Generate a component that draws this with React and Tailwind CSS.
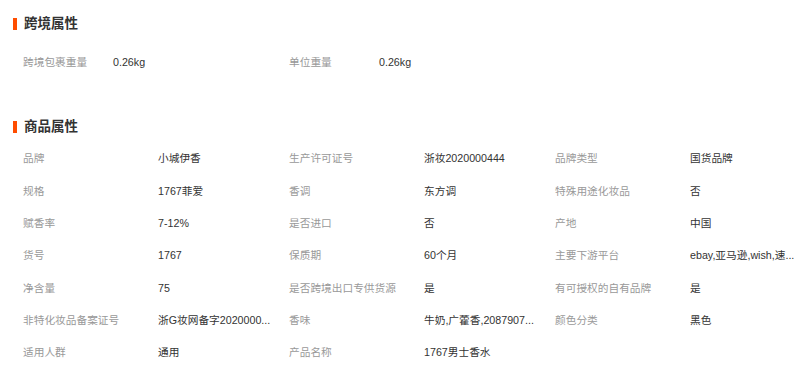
import React from 'react';

const crossBorder = [
    { label: '跨境包裹重量', value: '0.26kg' },
    { label: '单位重量', value: '0.26kg' },
];

// long values are shortened with "..." as the page shows them
const goods = [
    { label: '品牌', value: '小城伊香' },
    { label: '生产许可证号', value: '浙妆2020000444' },
    { label: '品牌类型', value: '国货品牌' },
    { label: '规格', value: '1767菲爱' },
    { label: '香调', value: '东方调' },
    { label: '特殊用途化妆品', value: '否' },
    { label: '赋香率', value: '7-12%' },
    { label: '是否进口', value: '否' },
    { label: '产地', value: '中国' },
    { label: '货号', value: '1767' },
    { label: '保质期', value: '60个月' },
    { label: '主要下游平台', value: 'ebay,亚马逊,wish,速...' },
    { label: '净含量', value: '75' },
    { label: '是否跨境出口专供货源', value: '是' },
    { label: '有可授权的自有品牌', value: '是' },
    { label: '非特化妆品备案证号', value: '浙G妆网备字2020000...' },
    { label: '香味', value: '牛奶,广藿香,2087907...' },
    { label: '颜色分类', value: '黑色' },
    { label: '适用人群', value: '通用' },
    { label: '产品名称', value: '1767男士香水' },
];

const SectionTitle = ({ children }) => (
    <div className="flex items-center h-[20px] pl-[13px]">
        <span className="w-[4px] h-[12px] bg-[#ff4d00]" />
        <span className="ml-[7px] text-[13.5px] font-bold text-[#333]">{children}</span>
    </div>
);

const Attr = ({ label, value, labelWidth }) => (
    <div className="flex items-center w-[266px] h-[32.33px]">
        <span className={`${labelWidth} shrink-0 text-[#999] whitespace-nowrap`}>{label}</span>
        <span className="whitespace-nowrap text-[#333]">{value}</span>
    </div>
);

const App = () => {
    return (
        <div
            className="w-[804px] h-[366px] bg-white overflow-hidden text-[10.7px] pt-[14px]"
            style={{ fontFamily: '"Liberation Sans", "Noto Sans CJK SC", sans-serif' }}
        >
            <SectionTitle>跨境属性</SectionTitle>
            <div className="flex pl-[23px] mt-[12px]">
                {crossBorder.map((item, i) => (
                    <Attr key={i} label={item.label} value={item.value} labelWidth="w-[90px]" />
                ))}
            </div>

            <div className="mt-[39px]">
                <SectionTitle>商品属性</SectionTitle>
            </div>
            <div className="grid grid-cols-[266px_266px_266px] pl-[23px] mt-[5px]">
                {goods.map((item, i) => (
                    <Attr key={i} label={item.label} value={item.value} labelWidth="w-[135px]" />
                ))}
            </div>
        </div>
    );
};

export default App;
